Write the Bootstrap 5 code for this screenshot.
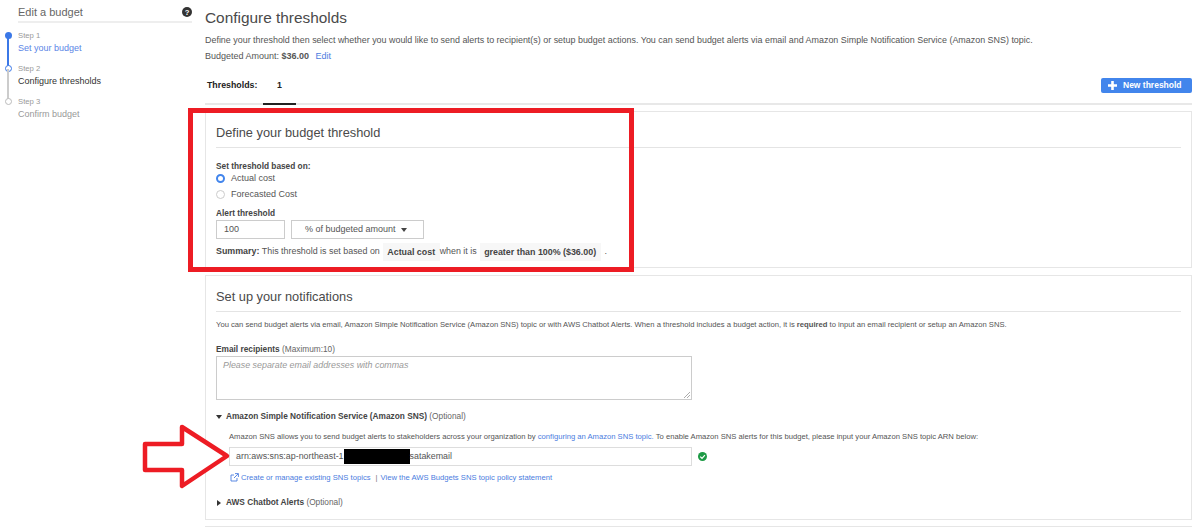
<!DOCTYPE html>
<html lang="en">
<head>
<meta charset="utf-8">
<title>Configure thresholds</title>
<link href="https://cdn.jsdelivr.net/npm/bootstrap@5.3.0/dist/css/bootstrap.min.css" rel="stylesheet">
<style>
html,body{height:527px;overflow:hidden;background:#fff;}
body{font-family:"Liberation Sans",Arial,sans-serif;font-size:9px;color:#555;position:relative;}
a{color:#4b7de0;text-decoration:none;}
.shell{display:flex;height:527px;}
.side{width:205px;flex:none;padding:0 13px 0 18px;}
.side-head{display:flex;justify-content:space-between;align-items:center;height:23px;padding-top:3px;border-bottom:2px solid #eee;font-size:11px;color:#666;margin-bottom:5px;}
.stepper{position:relative;}
.stp{height:33px;padding-top:1px;position:relative;}
.stp small{display:block;font-size:7.7px;line-height:13px;color:#999;}
.stp span{display:block;font-size:9px;line-height:12.5px;}
.stp-a span{color:#5b85e6;}
.stp-b span{color:#333;}
.stp-c span{color:#999;}
.dot{position:absolute;left:-13.5px;top:3.5px;width:7px;height:7px;border-radius:50%;background:#3b78e7;}
.stp-b .dot{background:#fff;border:1.5px solid #3b78e7;}
.stp-c .dot{background:#fff;border:1px solid #bbb;}
.rail{position:absolute;left:-11px;top:8px;width:2px;height:30px;background:#3b78e7;}
.stp-b .rail{background:#ccc;}
.main{flex:1;padding:0 8px 0 0;min-width:0;}
.page-title{font-size:15.4px;line-height:20px;color:#4a4a4a;margin:8px 0 0;font-weight:400;}
.intro{font-size:8.93px;line-height:13px;margin:6px 0 0;white-space:nowrap;}
.amount{line-height:13px;margin:3px 0 0;}
.amount a{margin-left:4px;}
.tabbar{display:flex;justify-content:space-between;height:38px;border-bottom:2px solid #e8e8e8;margin-top:4px;}
.tab-l{display:flex;font-size:8.8px;font-weight:700;color:#222;}
.tab-l b{padding:12px 0 0 2px;width:58px;}
.tab-n{width:33px;text-align:center;padding-top:12px;border-bottom:2px solid #222;height:38px;}
.new-btn{background:#4285ec;color:#fff;border:0;border-radius:2px;font-size:8.5px;font-weight:700;height:15px;width:91px;margin-top:11px;padding:0 0 0 7px;display:flex;align-items:center;gap:6px;}
.sect{border:1px solid #e6e6e6;padding:0 10px;margin-top:6px;}
.sect-one{height:157px;}
.sect-two{height:245px;margin-top:7px;}
.sect-h{font-size:12.8px;line-height:17px;color:#4a4a4a;font-weight:400;padding:12px 0 6px;border-bottom:1px solid #e4e4e4;margin:0;}
.lab{font-size:8.3px;font-weight:700;color:#444;line-height:11px;}
.lab-a{margin-top:13px;margin-bottom:-1px;}
.lab-b{margin-top:5px;}
.lab-c{margin-top:14px;}
.lab em{font-style:normal;font-weight:400;color:#666;}
.rad{display:flex;align-items:center;gap:6px;height:16px;color:#555;}
.rad i{width:9px;height:9px;border-radius:50%;border:1px solid #ccc;display:block;margin-top:-1px;}
.rad i.on{border:2.5px solid #4285ec;background:#fff;}
.thr{display:flex;gap:6px;margin-top:1px;}
.box{border:1px solid #ccc;height:19px;display:flex;align-items:center;color:#555;}
.box-num{width:69px;padding-left:7px;}
.box-sel{width:133px;padding-left:13px;gap:5px;}
.caret-d{width:0;height:0;border-left:3.5px solid transparent;border-right:3.5px solid transparent;border-top:4px solid #444;}
.summ{display:flex;align-items:center;font-size:8.9px;margin-top:4px;height:18px;white-space:nowrap;}
.summ b{color:#444;}
.chip{background:#f7f7f7;font-weight:700;color:#444;padding:0 4.5px;line-height:18px;margin-left:3px;}
.dotend{margin-left:4px;}
.note{font-size:7.65px;line-height:11px;margin:7px 0 0;white-space:nowrap;}
.ta{display:block;width:476px;height:44px;border:1px solid #ccc;font-style:italic;color:#999;font-size:8.9px;padding:2px 6px;margin-top:1px;position:relative;}
.ta svg{position:absolute;right:1px;bottom:1px;}
.exp{display:flex;align-items:center;gap:4px;font-size:8.3px;font-weight:700;color:#444;line-height:11px;}
.exp em{font-style:normal;font-weight:400;color:#666;}
.exp-a{margin-top:11px;}
.exp-b{margin-top:14px;}
.cd{width:0;height:0;border-left:3px solid transparent;border-right:3px solid transparent;border-top:4px solid #333;}
.cr{width:0;height:0;border-top:3px solid transparent;border-bottom:3px solid transparent;border-left:4px solid #333;margin:0 1px;}
.sns{padding-left:13px;}
.sns p{font-size:7.65px;line-height:11px;margin:9px 0 0;white-space:nowrap;}
.arn-row{display:flex;align-items:center;gap:6px;margin-top:5px;}
.arn{width:463px;height:19px;border:1px solid #ddd;font-size:8.9px;padding-left:6px;display:flex;align-items:center;color:#555;white-space:nowrap;}
.redact{display:inline-block;width:66px;height:15px;background:#000;flex:none;}
.lnks{font-size:7.65px;line-height:11px;margin-top:6px;padding-left:1px;display:flex;align-items:center;gap:2px;}
.sep{margin:0 1px 0 3px;color:#777;}
.ann-box{position:absolute;left:188px;top:108px;width:446px;height:164px;border:5px solid #ed1c24;}
.ann-arrow{position:absolute;left:142px;top:423px;}
</style>
</head>
<body>
<div class="shell">
  <aside class="side">
    <div class="side-head"><span>Edit a budget</span>
      <svg width="10" height="10" viewBox="0 0 11 11" aria-hidden="true"><circle cx="5.5" cy="5.5" r="5.5" fill="#333"/><text x="5.5" y="8.6" text-anchor="middle" font-size="8.5" font-weight="700" font-family="Liberation Sans" fill="#fff">?</text></svg>
    </div>
    <div class="stepper">
      <div class="stp stp-a"><i class="dot"></i><i class="rail"></i><small>Step 1</small><span>Set your budget</span></div>
      <div class="stp stp-b"><i class="dot"></i><i class="rail"></i><small>Step 2</small><span>Configure thresholds</span></div>
      <div class="stp stp-c"><i class="dot"></i><small>Step 3</small><span>Confirm budget</span></div>
    </div>
  </aside>
  <main class="main">
    <h1 class="page-title">Configure thresholds</h1>
    <p class="intro">Define your threshold then select whether you would like to send alerts to recipient(s) or setup budget actions. You can send budget alerts via email and Amazon Simple Notification Service (Amazon SNS) topic.</p>
    <p class="amount">Budgeted Amount: <b>$36.00</b> <a href="#">Edit</a></p>
    <div class="tabbar">
      <div class="tab-l"><b>Thresholds:</b><div class="tab-n">1</div></div>
      <button class="new-btn" type="button">
        <svg width="9" height="9" viewBox="0 0 9 9" aria-hidden="true"><path d="M3.2 0h2.6v3.2H9v2.6H5.8V9H3.2V5.8H0V3.2h3.2z" fill="#fff"/></svg>New threshold</button>
    </div>
    <section class="sect sect-one">
      <h2 class="sect-h">Define your budget threshold</h2>
      <div class="lab lab-a">Set threshold based on:</div>
      <div class="rad"><i class="on"></i>Actual cost</div>
      <div class="rad"><i></i>Forecasted Cost</div>
      <div class="lab lab-b">Alert threshold</div>
      <div class="thr"><div class="box box-num">100</div><div class="box box-sel">% of budgeted amount <i class="caret-d"></i></div></div>
      <div class="summ"><b>Summary:</b>&nbsp;This threshold is set based on <span class="chip">Actual cost</span>when it is <span class="chip">greater than 100% ($36.00)</span><span class="dotend">.</span></div>
    </section>
    <section class="sect sect-two">
      <h2 class="sect-h">Set up your notifications</h2>
      <p class="note">You can send budget alerts via email, Amazon Simple Notification Service (Amazon SNS) topic or with AWS Chatbot Alerts. When a threshold includes a budget action, it is <b>required</b> to input an email recipient or setup an Amazon SNS.</p>
      <div class="lab lab-c">Email recipients <em>(Maximum:10)</em></div>
      <div class="ta">Please separate email addresses with commas
        <svg width="6" height="6" viewBox="0 0 6 6" aria-hidden="true"><path d="M0 6 6 0M3 6l3-3" stroke="#888" stroke-width=".7"/></svg>
      </div>
      <div class="exp exp-a"><i class="cd"></i><span>Amazon Simple Notification Service (Amazon SNS) <em>(Optional)</em></span></div>
      <div class="sns">
        <p>Amazon SNS allows you to send budget alerts to stakeholders across your organization by <a href="#">configuring an Amazon SNS topic.</a> To enable Amazon SNS alerts for this budget, please input your Amazon SNS topic ARN below:</p>
        <div class="arn-row">
          <div class="arn">arn:aws:sns:ap-northeast-1<span class="redact"></span>satakemail</div>
          <svg width="9" height="9" viewBox="0 0 9 9" aria-hidden="true"><circle cx="4.5" cy="4.5" r="4.5" fill="#1d9a45"/><path d="M2.2 4.6 4 6.3l2.9-3.2" stroke="#fff" stroke-width="1.2" fill="none"/></svg>
        </div>
        <div class="lnks">
          <svg width="9" height="9" viewBox="0 0 9 9" aria-hidden="true"><path d="M7 5v3H1V2h3M5 .6h3.4V4M8.2.8 4 5" stroke="#4b7de0" fill="none" stroke-width=".9"/></svg>
          <a href="#">Create or manage existing SNS topics</a><span class="sep">|</span><a href="#">View the AWS Budgets SNS topic policy statement</a>
        </div>
      </div>
      <div class="exp exp-b"><i class="cr"></i><span>AWS Chatbot Alerts <em>(Optional)</em></span></div>
    </section>
    <div class="sect" style="height:20px"></div>
  </main>
</div>
<div class="ann-box"></div>
<svg class="ann-arrow" width="90" height="70" viewBox="0 0 90 70" aria-hidden="true"><path d="M3 21H40V4L85 33 40 63V47H3Z" fill="#fff" stroke="#ed1c24" stroke-width="4.5" stroke-linejoin="round"/></svg>
</body>
</html>
